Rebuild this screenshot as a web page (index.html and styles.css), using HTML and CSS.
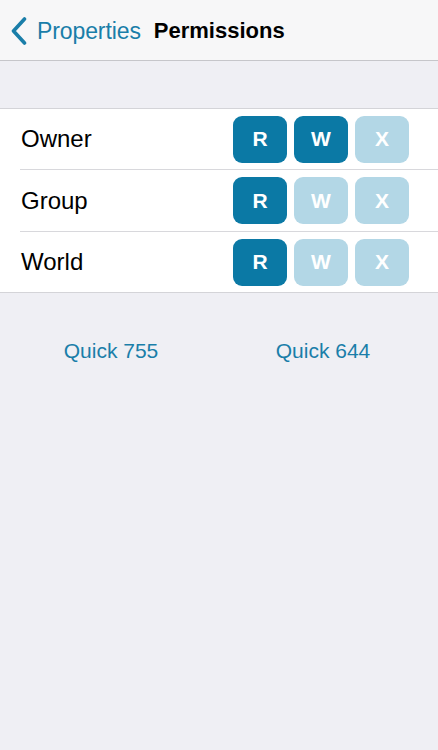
FILE: index.html
```html
<!DOCTYPE html>
<html>
<head>
<meta charset="utf-8">
<link rel="stylesheet" href="styles.css">
</head>
<body>
<header class="nav">
  <a class="back">
    <svg class="chev" width="16" height="28" viewBox="0 0 16 28"><path d="M13.5 2 L2.5 14 L13.5 26" fill="none" stroke="#1a7ea9" stroke-width="3.6" stroke-linecap="round" stroke-linejoin="round"/></svg>
    <span class="back-label">Properties</span>
  </a>
  <span class="title">Permissions</span>
</header>
<section class="table">
  <div class="row">
    <span class="label">Owner</span>
    <div class="perms"><span class="perm on">R</span><span class="perm on">W</span><span class="perm">X</span></div>
  </div>
  <div class="row mid">
    <span class="label">Group</span>
    <div class="perms"><span class="perm on">R</span><span class="perm">W</span><span class="perm">X</span></div>
  </div>
  <div class="row last">
    <span class="label">World</span>
    <div class="perms"><span class="perm on">R</span><span class="perm">W</span><span class="perm">X</span></div>
  </div>
</section>
<div class="quick">
  <span class="qbtn">Quick 755</span>
  <span class="qbtn">Quick 644</span>
</div>
</body>
</html>
```
FILE: styles.css
```css
html, body {
  margin: 0;
  padding: 0;
}
body {
  background: #efeff4;
  font-family: "Liberation Sans", Arial, sans-serif;
  width: 438px;
  height: 750px;
  overflow: hidden;
}
.nav {
  height: 60px;
  background: #f7f7f8;
  border-bottom: 1px solid #c6c6ca;
  display: flex;
  align-items: center;
  padding-left: 11px;
  box-sizing: content-box;
}
.back {
  display: flex;
  align-items: center;
  color: #1a7ea9;
  margin-top: 2px;
}
.chev {
  display: block;
  margin-right: 10px;
}
.back-label {
  font-size: 23px;
  letter-spacing: -0.1px;
}
.title {
  margin-left: 13px;
  font-size: 22px;
  font-weight: bold;
  color: #000;
  margin-top: 1px;
}
.table {
  margin-top: 47px;
  background: #fff;
  border-top: 1px solid #d4d4d8;
  border-bottom: 1px solid #d4d4d8;
}
.row {
  margin-left: 20px;
  height: 60px;
  border-bottom: 1px solid #d8d8dc;
  display: flex;
  align-items: center;
  justify-content: space-between;
  padding-right: 29px;
}
.row.mid {
  height: 61px;
}
.row.last {
  border-bottom: none;
}
.label {
  font-size: 24px;
  color: #000;
  padding-left: 1px;
}
.perms {
  display: flex;
  gap: 7px;
}
.perm {
  width: 54px;
  height: 47px;
  border-radius: 9px;
  background: #b3d7e6;
  color: #fff;
  font-weight: bold;
  font-size: 21px;
  display: flex;
  align-items: center;
  justify-content: center;
}
.perm.on {
  background: #0b79a5;
}
.quick {
  display: grid;
  grid-template-columns: 1fr 1fr;
  padding: 46px 9px 0 5px;
}
.qbtn {
  text-align: center;
  font-size: 21px;
  line-height: 24px;
  color: #1a7ea9;
}
```
